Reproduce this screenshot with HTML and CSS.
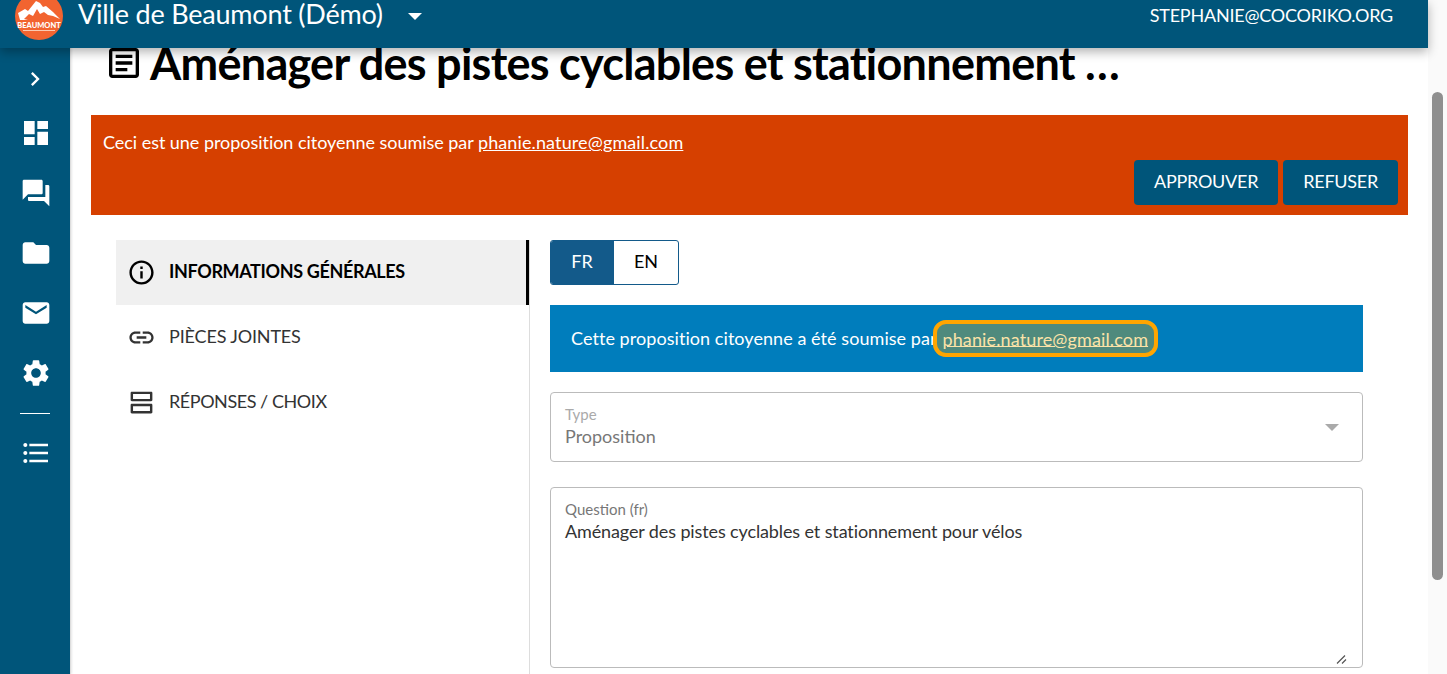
FILE: index.html
```html
<!DOCTYPE html>
<html lang="fr">
<head>
    <meta charset="UTF-8">
    <meta name="viewport" content="width=device-width, initial-scale=1.0">
    <title>Ville de Beaumont (Démo)</title>
    <link rel="stylesheet" href="styles.css">
</head>
<body>

    <div class="window">
        <div class="app">
            <header class="topbar">
                <svg class="logo" viewBox="0 0 48 48">
                    <circle cx="24" cy="24" r="24" fill="#f26430"/>
                    <path d="M3 21 L10 17 L13 19 L21 9 L25 11 L28 15 L31 14 L38 20 L45 27 L38 24 L33 23 L29 20 L25 22 L22 17 L18 24 L14 22 L9 27 L13 28 L5 28 Z" fill="#fff"/>
                    <text class="logo-name" x="24" y="35.5" text-anchor="middle">BEAUMONT</text>
                    <rect x="8" y="38" width="32" height="1" fill="#fbc9b0"/>
                </svg>
                <span class="site-name">Ville de Beaumont (Démo)</span>
                <span class="site-caret"></span>
                <span class="user-email">STEPHANIE@COCORIKO.ORG</span>
            </header>

            <div class="layout">
                <nav class="sidebar">
                    <a class="side-toggle"><svg viewBox="0 0 24 24"><path d="M10 6L8.59 7.41 13.17 12l-4.58 4.59L10 18l6-6z"/></svg></a>
                    <a class="side-item"><svg viewBox="0 0 24 24"><path d="M3 13h8V3H3v10zm0 8h8v-6H3v6zm10 0h8V11h-8v10zm0-18v6h8V3h-8z"/></svg></a>
                    <a class="side-item"><svg viewBox="0 0 24 24"><path d="M21 6h-2v9H6v2c0 .55.45 1 1 1h11l4 4V7c0-.55-.45-1-1-1zm-4 6V3c0-.55-.45-1-1-1H3c-.55 0-1 .45-1 1v14l4-4h10c.55 0 1-.45 1-1z"/></svg></a>
                    <a class="side-item"><svg viewBox="0 0 24 24"><path d="M10 4H4c-1.1 0-1.99.9-1.99 2L2 18c0 1.1.9 2 2 2h16c1.1 0 2-.9 2-2V8c0-1.1-.9-2-2-2h-8l-2-2z"/></svg></a>
                    <a class="side-item"><svg viewBox="0 0 24 24"><path d="M20 4H4c-1.1 0-1.99.9-1.99 2L2 18c0 1.1.9 2 2 2h16c1.1 0 2-.9 2-2V6c0-1.1-.9-2-2-2zm0 4l-8 5-8-5V6l8 5 8-5v2z"/></svg></a>
                    <a class="side-item"><svg viewBox="0 0 24 24"><path d="M19.14 12.94c.04-.3.06-.61.06-.94 0-.32-.02-.64-.07-.94l2.03-1.58c.18-.14.23-.41.12-.61l-1.92-3.32c-.12-.22-.37-.29-.59-.22l-2.39.96c-.5-.38-1.03-.7-1.62-.94l-.36-2.54c-.04-.24-.24-.41-.48-.41h-3.84c-.24 0-.43.17-.47.41l-.36 2.54c-.59.24-1.13.57-1.62.94l-2.39-.96c-.22-.08-.47 0-.59.22L2.74 8.87c-.12.21-.08.47.12.61l2.03 1.58c-.05.3-.09.63-.09.94s.02.64.07.94l-2.03 1.58c-.18.14-.23.41-.12.61l1.92 3.32c.12.22.37.29.59.22l2.39-.96c.5.38 1.03.7 1.62.94l.36 2.54c.05.24.24.41.48.41h3.84c.24 0 .44-.17.47-.41l.36-2.54c.59-.24 1.13-.56 1.62-.94l2.39.96c.22.08.47 0 .59-.22l1.92-3.32c.12-.22.07-.47-.12-.61l-2.01-1.58zM12 15.6c-1.98 0-3.6-1.62-3.6-3.6s1.62-3.6 3.6-3.6 3.6 1.62 3.6 3.6-1.62 3.6-3.6 3.6z"/></svg></a>
                    <div class="side-divider"></div>
                    <a class="side-item"><svg viewBox="0 0 24 24"><path d="M4 10.5c-.83 0-1.5.67-1.5 1.5s.67 1.5 1.5 1.5 1.5-.67 1.5-1.5-.67-1.5-1.5-1.5zm0-6c-.83 0-1.5.67-1.5 1.5S3.17 7.5 4 7.5 5.5 6.83 5.5 6 4.83 4.5 4 4.5zm0 12c-.83 0-1.5.68-1.5 1.5s.68 1.5 1.5 1.5 1.5-.68 1.5-1.5-.67-1.5-1.5-1.5zM7 19h14v-2H7v2zm0-6h14v-2H7v2zm0-8v2h14V5H7z"/></svg></a>
                </nav>

                <main class="content">
                    <h1 class="page-title">
                        <svg viewBox="0 0 24 24"><path d="M19 5v14H5V5h14m0-2H5c-1.1 0-2 .9-2 2v14c0 1.1.9 2 2 2h14c1.1 0 2-.9 2-2V5c0-1.1-.9-2-2-2zM14 17H7v-2h7v2zm3-4H7v-2h10v2zm0-4H7V7h10v2z"/></svg>
                        <span>Aménager des pistes cyclables et stationnement …</span>
                    </h1>

                    <section class="alert-banner">
                        <p>Ceci est une proposition citoyenne soumise par <a href="#">phanie.nature@gmail.com</a></p>
                        <div class="alert-actions">
                            <button class="action-btn">APPROUVER</button>
                            <button class="action-btn">REFUSER</button>
                        </div>
                    </section>

                    <div class="columns">
                        <ul class="tabs">
                            <li class="tab active">
                                <svg viewBox="0 0 24 24"><path d="M11 7h2v2h-2zm0 4h2v6h-2zm1-9C6.48 2 2 6.48 2 12s4.48 10 10 10 10-4.48 10-10S17.52 2 12 2zm0 18c-4.41 0-8-3.59-8-8s3.59-8 8-8 8 3.59 8 8-3.59 8-8 8z"/></svg>
                                <span>INFORMATIONS GÉNÉRALES</span>
                            </li>
                            <li class="tab">
                                <svg viewBox="0 0 24 24"><path d="M3.9 12c0-1.71 1.39-3.1 3.1-3.1h4V7H7c-2.76 0-5 2.24-5 5s2.24 5 5 5h4v-1.9H7c-1.71 0-3.1-1.39-3.1-3.1zM8 13h8v-2H8v2zm9-6h-4v1.9h4c1.71 0 3.1 1.39 3.1 3.1s-1.39 3.1-3.1 3.1h-4V17h4c2.76 0 5-2.24 5-5s-2.24-5-5-5z"/></svg>
                                <span>PIÈCES JOINTES</span>
                            </li>
                            <li class="tab tab-tight">
                                <svg viewBox="0 0 24 24"><path d="M19 15v4H5v-4h14m1-2H4c-.55 0-1 .45-1 1v6c0 .55.45 1 1 1h16c.55 0 1-.45 1-1v-6c0-.55-.45-1-1-1zM19 5v4H5V5h14m1-2H4c-.55 0-1 .45-1 1v6c0 .55.45 1 1 1h16c.55 0 1-.45 1-1V4c0-.55-.45-1-1-1z"/></svg>
                                <span>RÉPONSES / CHOIX</span>
                            </li>
                        </ul>

                        <div class="form">
                            <div class="lang-switch">
                                <span class="lang active">FR</span>
                                <span class="lang">EN</span>
                            </div>

                            <div class="info-box">
                                Cette proposition citoyenne a été soumise par
                                <a class="highlighted" href="#">phanie.nature@gmail.com</a>
                            </div>

                            <div class="field field-select">
                                <div class="select-text">
                                    <label>Type</label>
                                    <div class="field-value">Proposition</div>
                                </div>
                                <span class="select-caret"></span>
                            </div>

                            <div class="field field-text">
                                <label>Question (fr)</label>
                                <div class="field-value">Aménager des pistes cyclables et stationnement pour vélos</div>
                                <svg class="resize-handle" viewBox="0 0 11 9"><path d="M1 8.5L9 .5M6 8.5L10 4.5" stroke="#555" stroke-width="1.2" fill="none"/></svg>
                            </div>
                        </div>
                    </div>
                </main>
            </div>
        </div>

        <div class="scrollbar"><div class="scrollbar-thumb"></div></div>
    </div>

</body>
</html>
```

FILE: styles.css
```css
* {
    box-sizing: border-box;
}

html, body {
    margin: 0;
    height: 100%;
    overflow: hidden;
}

body {
    font-family: "Lato", "Liberation Sans", sans-serif;
    color: #000;
    background-color: #fff;
}

a {
    color: inherit;
}

.window {
    display: flex;
    height: 100vh;
}

.app {
    flex: 1;
    min-width: 0;
    display: flex;
    flex-direction: column;
}

/* top bar */
.topbar {
    position: relative;
    z-index: 2;
    flex: none;
    display: flex;
    align-items: center;
    height: 48px;
    padding: 0 35px 16px 15px;
    background-color: #00557a;
    color: #fff;
    box-shadow: 0 4px 10px rgba(0, 0, 0, 0.3);
}

.logo {
    flex: none;
    width: 48px;
    height: 48px;
    margin: 0 15px 0 0;
}

.logo-name {
    font-size: 7.5px;
    font-weight: 900;
    fill: #fff;
}

.site-name {
    font-size: 27px;
    line-height: 26px;
    letter-spacing: -0.2px;
    margin-top: -4px;
}

.site-caret {
    width: 0;
    height: 0;
    margin: 0 0 0 25px;
    border-left: 7.5px solid transparent;
    border-right: 7.5px solid transparent;
    border-top: 7.5px solid #fff;
}

.user-email {
    margin-left: auto;
    font-size: 18px;
    letter-spacing: -0.22px;
    margin-top: -2px;
}

.layout {
    flex: 1;
    min-height: 0;
    display: flex;
}

/* side menu */
.sidebar {
    flex: none;
    width: 71px;
    background-color: #00557a;
    border-right: 1px solid #ddd;
    box-shadow: 1px 0 2px rgba(0, 0, 0, 0.1);
}

.sidebar svg {
    fill: #fff;
}

.side-toggle {
    display: flex;
    justify-content: center;
    height: 55px;
    padding-top: 17px;
}

.side-toggle svg {
    width: 28px;
    height: 28px;
}

.side-item {
    display: flex;
    align-items: center;
    justify-content: center;
    height: 60px;
    padding-left: 1px;
}

.side-item svg {
    width: 32px;
    height: 32px;
}

.side-divider {
    width: 30px;
    height: 1px;
    margin: 10px 0 9px 20px;
    background-color: #fff;
}

/* main */
.content {
    flex: 1;
    min-width: 0;
    display: flex;
    flex-direction: column;
}

.page-title {
    flex: none;
    display: flex;
    align-items: center;
    height: 54px;
    margin: -11px 0 24px 33px;
    font-size: 45px;
    font-weight: 700;
    letter-spacing: -0.73px;
    white-space: nowrap;
}

.page-title span {
    margin-top: -2px;
}

.page-title svg {
    width: 40px;
    height: 40px;
    margin: -2px 6px 0 0;
}

.alert-banner {
    flex: none;
    height: 100px;
    margin: 0 20px 25px 20px;
    padding: 17px 10px 10px 12px;
    background-color: #d64000;
    color: #fff;
    font-size: 18px;
}

.alert-banner p {
    margin: 0;
    line-height: 21px;
    letter-spacing: -0.04px;
}

.alert-banner a {
    letter-spacing: 0.12px;
}

.alert-actions {
    display: flex;
    justify-content: flex-end;
    gap: 5px;
    margin-top: 7px;
}

.action-btn {
    height: 45px;
    padding: 0 20px 4px;
    border: none;
    border-radius: 4px;
    background-color: #00557a;
    color: #fff;
    font-family: inherit;
    font-size: 18px;
    letter-spacing: -0.25px;
}

.columns {
    flex: 1;
    min-height: 0;
    display: flex;
    padding-left: 45px;
}

.tabs {
    flex: none;
    width: 414px;
    margin: 0;
    padding: 0;
    list-style: none;
    border-right: 1px solid #ddd;
}

.tab {
    display: flex;
    align-items: center;
    height: 65px;
    padding-left: 11px;
    font-size: 18px;
    color: #333;
    letter-spacing: -0.15px;
}

.tab span {
    margin-top: -4px;
}

.tab svg {
    width: 29px;
    height: 29px;
    margin-right: 13px;
    fill: #333;
}

.tab.active {
    background-color: #f0f0f0;
    border-right: 3px solid #000;
    color: #000;
    font-weight: 700;
    letter-spacing: -0.36px;
}

.tab.active svg {
    fill: #000;
}

.tab-tight {
    letter-spacing: -0.45px;
}

.form {
    flex: none;
    width: 813px;
    margin-left: 20px;
}

.lang-switch {
    display: inline-flex;
    vertical-align: top;
    height: 45px;
    border: 1px solid #135a8a;
    border-radius: 3px;
    overflow: hidden;
    font-size: 18px;
}

.lang {
    display: flex;
    align-items: center;
    justify-content: center;
    width: 64px;
    padding-bottom: 4px;
}

.lang.active {
    width: 63px;
    padding-right: 1px;
    background-color: #135a8a;
    color: #fff;
}

.info-box {
    height: 67px;
    margin: 20px 0;
    padding-left: 21px;
    background-color: #007dbc;
    color: #fff;
    font-size: 18px;
    letter-spacing: 0.06px;
    line-height: 67px;
}

.highlighted {
    margin-left: -8px;
    padding: 3.5px 5.5px;
    border: 4.5px solid #ffa500;
    border-radius: 13px;
    background-color: #4f8a7d;
    color: #fbe3a8;
    letter-spacing: 0.13px;
}

.field {
    border: 1px solid #bbb;
    border-radius: 4px;
    padding: 13px 14px;
}

.field label {
    display: block;
    font-size: 15px;
    line-height: 17px;
    color: #777;
}

.field-value {
    font-size: 18px;
    line-height: 21px;
    color: #333;
    letter-spacing: -0.12px;
}

.field-select {
    display: flex;
    align-items: center;
    justify-content: space-between;
    height: 70px;
    margin-bottom: 25px;
}

.select-text {
    margin-top: -2px;
}

.field-select label {
    color: #aaa;
    margin-bottom: 3px;
}

.field-select .field-value {
    color: #777;
    letter-spacing: 0;
}

.select-caret {
    width: 0;
    height: 0;
    margin-right: 9px;
    border-left: 7px solid transparent;
    border-right: 7px solid transparent;
    border-top: 7px solid #aaa;
}

.field-text {
    position: relative;
    height: 181px;
}

.field-text .field-value {
    margin-top: 3px;
}

.resize-handle {
    position: absolute;
    right: 15px;
    bottom: 3px;
    width: 11px;
    height: 9px;
}

/* scrollbar */
.scrollbar {
    flex: none;
    width: 19px;
    background-color: #fafafa;
    padding: 92px 4px 0;
}

.scrollbar-thumb {
    height: 488px;
    border-radius: 6px;
    background-color: #8f8f8f;
}
```
